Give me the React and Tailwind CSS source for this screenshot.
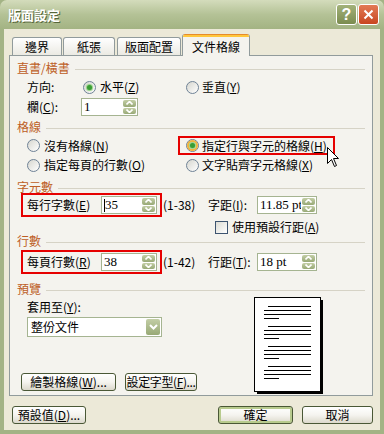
import React from "react";

const FONT = "font-['Noto_Sans_CJK_TC','Liberation_Sans',sans-serif]";

function U({ children }) {
  return <span className="underline underline-offset-1">{children}</span>;
}

function Radio({ checked, hot }) {
  return (
    <span className="relative inline-flex w-[13px] h-[13px] shrink-0 items-center justify-center rounded-full border border-[#6f8296] bg-gradient-to-br from-[#d6d6cf] to-white">
      {hot && <span className="absolute inset-0 rounded-full border-2 border-[#f5b43a]" />}
      {checked && <span className="relative w-[5px] h-[5px] rounded-full bg-[#3a9d34] shadow-[0_0_1px_1px_#8fd07f]" />}
    </span>
  );
}

function Arrow({ up }) {
  return (
    <svg width="7" height="4" viewBox="0 0 7 4">
      <path d={up ? "M0.5 3.5 L3.5 0.5 L6.5 3.5" : "M0.5 0.5 L3.5 3.5 L6.5 0.5"} stroke="#ffffff" strokeWidth="1.6" fill="none" />
    </svg>
  );
}

function Spin() {
  return (
    <div className="flex flex-col w-[15px] h-full gap-px p-px shrink-0">
      <div className="flex-1 flex items-center justify-center rounded-[2px] bg-gradient-to-b from-[#c3cea6] to-[#98a976]">
        <Arrow up />
      </div>
      <div className="flex-1 flex items-center justify-center rounded-[2px] bg-gradient-to-b from-[#c3cea6] to-[#98a976]">
        <Arrow />
      </div>
    </div>
  );
}

function NumInput({ className, value, caret }) {
  return (
    <div className={`flex h-[18px] border border-[#a5b491] bg-white ${className}`}>
      <div className="flex-1 flex items-center pl-[2px] font-['Liberation_Serif',serif] text-[13px] leading-[14px] overflow-hidden">
        {caret && <span className="w-px h-[13px] bg-black" />}
        <span>{value}</span>
      </div>
      <Spin />
    </div>
  );
}

function Header({ children, className }) {
  return (
    <div className={`flex items-center h-[12px] pl-[7px] pr-[7px] ${className}`}>
      <span className="text-[#bd5e26] leading-[12px]">{children}</span>
      <div className="flex-1 h-px bg-[#d6d3c6] ml-[5px] mt-[3px]" />
    </div>
  );
}

function Btn({ className, children, focus }) {
  return (
    <div
      className={`flex items-center justify-center h-[18px] rounded-[3px] border border-[#4a5836] bg-gradient-to-b from-white via-[#f5f4ef] to-[#dcd9cc] ${
        focus ? "shadow-[inset_0_0_0_2px_#b8cb8e]" : ""
      } ${className}`}
    >
      {children}
    </div>
  );
}

function Tab({ children, className }) {
  return (
    <div className={`h-[18px] flex items-center justify-center border border-b-0 border-[#919b9c] rounded-t-[3px] bg-gradient-to-b from-white to-[#ebeae3] ${className}`}>
      {children}
    </div>
  );
}

export default function App() {
  return (
    <div className={`relative w-[384px] h-[434px] overflow-hidden whitespace-nowrap bg-[#a3b385] flex flex-col ${FONT} text-[12px] leading-[14px] text-black`}>
      {/* title bar */}
      <div className="h-[29px] shrink-0 flex items-center pl-[8px] pr-[5px] rounded-t-[7px] bg-gradient-to-b from-[#d4dcbc] via-[#b4c296] to-[#a3b383]">
        <span className="font-bold text-[13px] text-white [text-shadow:1px_1px_0_#56663a]">版面設定</span>
        <div className="ml-auto flex gap-px">
          <div className="w-[21px] h-[21px] rounded-[3px] border border-white bg-gradient-to-b from-[#a3b27a] to-[#7b8c4f] flex items-center justify-center text-white font-bold text-[16px] font-['Liberation_Sans',sans-serif]">
            ?
          </div>
          <div className="w-[21px] h-[21px] rounded-[3px] border border-white bg-gradient-to-b from-[#e27a54] to-[#c8461f] flex items-center justify-center">
            <svg width="11" height="11" viewBox="0 0 11 11">
              <path d="M1.5 1.5 L9.5 9.5 M9.5 1.5 L1.5 9.5" stroke="#ffffff" strokeWidth="2" />
            </svg>
          </div>
        </div>
      </div>

      {/* body */}
      <div className="flex-1 mx-[4px] mb-[4px] bg-[#ece9d8] flex flex-col pl-[5px] pr-[7px]">
        {/* tabs */}
        <div className="h-[26px] flex items-end pl-[3px]">
          <Tab className="w-[50px]">邊界</Tab>
          <Tab className="w-[52px] ml-px">紙張</Tab>
          <Tab className="w-[64px] ml-[2px]">版面配置</Tab>
          <div className="relative z-10 -mb-px ml-px w-[68px] h-[22px] flex flex-col border-x border-[#919b9c] rounded-t-[3px] bg-[#f4f3ee] overflow-hidden">
            <div className="h-px bg-[#e68b2c]" />
            <div className="h-[2px] bg-[#ffc73c]" />
            <div className="flex-1 flex items-center justify-center">文件格線</div>
          </div>
        </div>

        {/* panel */}
        <div className="h-[341px] border border-[#919b9c] bg-[#f4f3ee] flex flex-col">
          <Header className="mt-[6px]">直書/橫書</Header>
          <div className="flex h-[18px] mt-[4px] items-center">
            <div className="w-[176px] pl-[17px] flex items-center">
              <span className="w-[56px]">方向:</span>
              <Radio checked />
              <span className="ml-[4px]">
                水平(<U>Z</U>)
              </span>
            </div>
            <div className="flex items-center">
              <Radio />
              <span className="ml-[3px]">
                垂直(<U>Y</U>)
              </span>
            </div>
          </div>
          <div className="flex h-[18px] mt-[2px] items-center pl-[17px]">
            <span className="w-[54px]">
              欄(<U>C</U>):
            </span>
            <NumInput className="w-[57px]" value="1" />
          </div>

          <Header className="mt-[5px]">格線</Header>
          <div className="flex h-[19px] mt-[3px] items-center">
            <div className="w-[176px] pl-[17px] flex items-center">
              <Radio />
              <span className="ml-[4px]">
                沒有格線(<U>N</U>)
              </span>
            </div>
            <div className="-ml-[8px] w-[157px] h-[19px] border-2 border-[#e60000] pl-[6px] flex items-center">
              <Radio checked hot />
              <span className="ml-[3px]">
                指定行與字元的格線(<U>H</U>)
              </span>
            </div>
          </div>
          <div className="flex h-[18px] mt-px items-center">
            <div className="w-[176px] pl-[17px] flex items-center">
              <Radio />
              <span className="ml-[4px]">
                指定每頁的行數(<U>O</U>)
              </span>
            </div>
            <div className="flex items-center">
              <Radio />
              <span className="ml-[3px]">
                文字貼齊字元格線(<U>X</U>)
              </span>
            </div>
          </div>

          <Header className="mt-[7px]">字元數</Header>
          <div className="flex h-[24px] items-center">
            <div className="ml-[11px] w-[141px] h-[24px] border-2 border-[#e60000] pl-[4px] flex items-center">
              <span className="w-[74px]">
                每行字數(<U>E</U>)
              </span>
              <NumInput className="w-[56px]" value="35" caret />
            </div>
            <span className="w-[46px] pl-px">(1-38)</span>
            <span className="w-[49px]">
              字距(<U>I</U>):
            </span>
            <NumInput className="w-[60px]" value="11.85 pt" />
          </div>
          <div className="flex h-[14px] mt-[3px] items-center pl-[205px]">
            <span className="w-[13px] h-[13px] border border-[#3d5470] bg-gradient-to-br from-[#dcdcd4] to-white" />
            <span className="ml-[4px]">
              使用預設行距(<U>A</U>)
            </span>
          </div>

          <Header className="mt-px">行數</Header>
          <div className="flex h-[24px] mt-[3px] items-center">
            <div className="ml-[11px] w-[141px] h-[24px] border-2 border-[#e60000] pl-[4px] flex items-center">
              <span className="w-[74px]">
                每頁行數(<U>R</U>)
              </span>
              <NumInput className="w-[56px]" value="38" />
            </div>
            <span className="w-[46px] pl-px">(1-42)</span>
            <span className="w-[49px]">
              行距(<U>T</U>):
            </span>
            <NumInput className="w-[60px]" value="18 pt" />
          </div>

          <Header className="mt-[9px]">預覽</Header>
          <div className="flex mt-[2px]">
            <div className="w-[244px] flex flex-col">
              <div className="h-[16px] mt-[2px] pl-[17px] flex items-center">
                套用至(<U>Y</U>):
              </div>
              <div className="ml-[17px] mt-[2px] w-[135px] h-[20px] border border-[#a5b491] bg-white flex">
                <div className="flex-1 flex items-center pl-[3px]">整份文件</div>
                <div className="w-[16px] p-px flex">
                  <div className="flex-1 flex items-center justify-center rounded-[2px] bg-gradient-to-b from-[#c3cea6] to-[#98a976]">
                    <svg width="9" height="6" viewBox="0 0 9 6">
                      <path d="M1 1 L4.5 4.5 L8 1" stroke="#ffffff" strokeWidth="2" fill="none" />
                    </svg>
                  </div>
                </div>
              </div>
              <div className="flex ml-[11px] mt-[36px] gap-[9px]">
                <Btn className="w-[95px]">
                  繪製格線(<U>W</U>)...
                </Btn>
                <Btn className="w-[72px] tracking-[-0.4px]">
                  設定字型(<U>F</U>)...
                </Btn>
              </div>
            </div>
            <svg width="70" height="98" viewBox="0 0 70 98">
              <rect x="3" y="3" width="66" height="94" fill="#000000" />
              <rect x="0.5" y="0.5" width="66" height="94" fill="#ffffff" stroke="#000000" />
              {[9, 29, 49, 69].map((gy) => (
                <g key={gy} fill="#000000">
                  <rect x="14" y={gy} width="43" height="1" />
                  <rect x="10" y={gy + 4} width="47" height="1" />
                  <rect x="10" y={gy + 8} width="47" height="1" />
                  <rect x="10" y={gy + 12} width="15" height="1" />
                </g>
              ))}
            </svg>
          </div>
        </div>

        {/* bottom buttons */}
        <div className="flex mt-[10px]">
          <Btn className="w-[74px] ml-[3px]">
            預設值(<U>D</U>)...
          </Btn>
          <Btn className="w-[75px] ml-auto" focus>
            確定
          </Btn>
          <Btn className="w-[71px] ml-[9px]">取消</Btn>
        </div>
      </div>

      {/* mouse cursor */}
      <svg className="absolute left-[327px] top-[147px]" width="13" height="21" viewBox="0 0 13 21">
        <path d="M0.5 0.5 L0.5 16.5 L4.5 12.5 L7.5 19.5 L9.5 18.5 L6.5 11.5 L11.5 11.5 Z" fill="#ffffff" stroke="#000000" strokeWidth="1" />
      </svg>
    </div>
  );
}
